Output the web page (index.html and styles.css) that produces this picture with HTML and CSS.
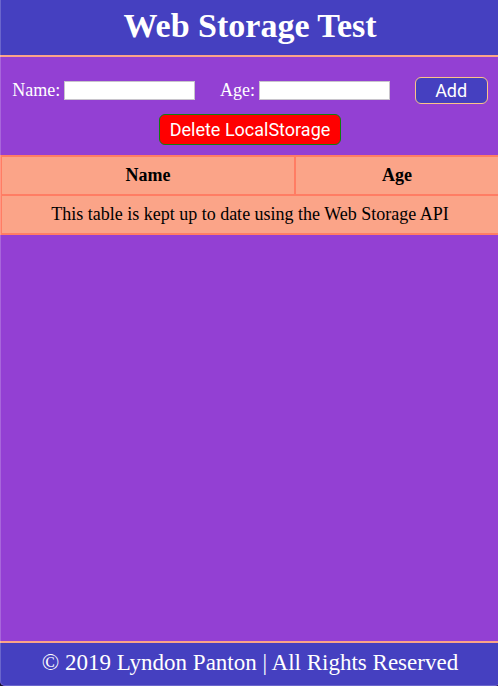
FILE: index.html
```html
<!DOCTYPE html>
<html lang="en">
<head>
<meta charset="utf-8">
<meta name="viewport" content="width=device-width, initial-scale=1">
<title>Web Storage Test</title>
<link rel="stylesheet" href="styles.css">
</head>
<body>
<header class="header">
  <h1 class="title">Web Storage Test</h1>
</header>
<main class="main">
  <form class="form">
    <div class="field">
      <label for="name">Name:</label>
      <input id="name" type="text">
    </div>
    <div class="field">
      <label for="age">Age:</label>
      <input id="age" type="text">
    </div>
    <button class="button add" type="button">Add</button>
  </form>
  <div class="actions">
    <button class="button delete" type="button">Delete LocalStorage</button>
  </div>
  <table class="table">
    <thead>
      <tr><th class="name-column">Name</th><th>Age</th></tr>
    </thead>
    <tbody>
      <tr><td colspan="2">This table is kept up to date using the Web Storage API</td></tr>
    </tbody>
  </table>
</main>
<footer class="footer">© 2019 Lyndon Panton | All Rights Reserved</footer>
</body>
</html>
```

FILE: styles.css
```css
* {
  box-sizing: border-box;
}

html {
  overflow: hidden;
  background: #17152f;
}

body {
  position: relative;
  display: flex;
  flex-direction: column;
  width: calc(100% + 2px);
  min-height: 100vh;
  margin: 0;
  overflow: hidden;
  border-radius: 0 0 5px 5px;
  background: #9340d3;
  color: #fff;
  font: 18px/20px "Palatino Linotype", Palatino, "Liberation Serif", serif;
}

/* Light edge along the window's left and bottom sides */
body::after {
  content: "";
  position: absolute;
  inset: 0;
  border: solid rgba(255, 255, 255, 0.2);
  border-width: 0 0 1px 1px;
  border-radius: 0 0 5px 5px;
  pointer-events: none;
}

.header {
  padding: 6px 0 9px;
  border-bottom: 2px solid #fba488;
  background: #4540c0;
  text-align: center;
}

.title {
  margin: 0;
  font-size: 34px;
  line-height: 40px;
}

.main {
  flex: 1;
}

.form {
  display: flex;
  align-items: center;
  justify-content: space-around;
  padding-top: 20px;
}

.field {
  display: flex;
  align-items: center;
  gap: 4px;
}

.field label {
  padding-bottom: 2px;
}

.field input {
  width: 131px;
  height: 19px;
  padding: 1px;
  border: 1px solid #c8c4cc;
  background: #fff;
}

.button {
  border-radius: 6px;
  color: #fff;
  font: 18px/20px Roboto, "Liberation Sans", sans-serif;
}

.add {
  width: 73px;
  height: 27px;
  padding: 0;
  border: 1px solid #fbc488;
  background: #4540c0;
}

.actions {
  padding: 10px 0;
  text-align: center;
}

.delete {
  display: block;
  height: 31px;
  margin: 0 auto;
  padding: 0 10px;
  border: 1px solid #108010;
  background: #f00;
}

.table {
  width: 100%;
  border-collapse: collapse;
  background: #fba488;
  color: #000;
}

.table th,
.table td {
  height: 39px;
  padding: 0 0 2px;
  border: 2px solid #ff7d64;
  text-align: center;
}

.name-column {
  width: 59%;
}

.footer {
  padding: 10px 0 13px;
  border-top: 2px solid #fba488;
  background: #4540c0;
  font-size: 23px;
  text-align: center;
}
```
